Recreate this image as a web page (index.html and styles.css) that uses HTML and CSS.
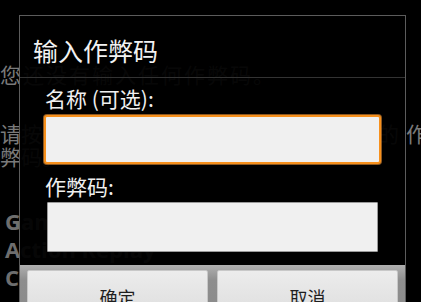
FILE: index.html
```html
<!DOCTYPE html>
<html lang="zh-CN">
<head>
<meta charset="utf-8">
<title>输入作弊码</title>
<link rel="stylesheet" href="styles.css">
</head>
<body>
<div class="page">
  <p class="empty">您还没有输入任何作弊码。</p>
  <p class="hint"><span class="line first"><span>请按手机菜单键并选择添加按钮来添加新的</span><span>作</span></span><span class="line">弊码。</span></p>
  <ul class="types">
    <li>Game Genie</li>
    <li>Action Replay</li>
    <li>Code Breaker</li>
  </ul>
</div>
<div class="dialog">
  <div class="title">输入作弊码</div>
  <div class="divider"></div>
  <div class="body">
    <label class="label">名称 (可选):</label>
    <div class="field focused"></div>
    <label class="label second">作弊码:</label>
    <div class="field plain"></div>
  </div>
  <div class="buttons">
    <div class="btn">确定</div>
    <div class="btn">取消</div>
  </div>
</div>
</body>
</html>
```
FILE: styles.css
```css
html, body {
  margin: 0;
  padding: 0;
  background: #000;
  width: 421px;
  height: 302px;
  overflow: hidden;
  font-family: "Noto Sans CJK SC", "Noto Sans", sans-serif;
}
.page {
  color: #7a7a7a;
}
.empty {
  margin: 0;
  padding-top: 62px;
  font-size: 21px;
  line-height: 24px;
  letter-spacing: 2px;
  white-space: nowrap;
}
.hint {
  margin: 36px 0 0 0;
  font-size: 21px;
  line-height: 23px;
  white-space: nowrap;
}
.hint .line {
  display: block;
}
.hint .line.first {
  display: flex;
  justify-content: space-between;
  width: 427px;
}
.types {
  list-style: none;
  margin: 39px 0 0 0;
  padding: 0 0 0 5px;
  font-family: "Open Sans", "DejaVu Sans", sans-serif;
  font-weight: bold;
  font-size: 22px;
  line-height: 28px;
  color: #6e6e6e;
  white-space: nowrap;
}
.dialog {
  position: absolute;
  left: 19px;
  top: 15px;
  width: 385px;
  height: 300px;
  border: 1px solid #5c5c5c;
  background: rgba(0, 0, 0, 0.94);
  display: flex;
  flex-direction: column;
}
.title {
  height: 54px;
  padding: 7px 0 0 13px;
  display: flex;
  align-items: center;
  font-size: 25px;
  color: #f2f2f2;
}
.divider {
  height: 1px;
  background: #333;
}
.body {
  display: flex;
  flex-direction: column;
  padding: 8px 0 13px 24px;
}
.label {
  display: block;
  padding-left: 1px;
  font-size: 21px;
  line-height: 25px;
  color: #f0f0f0;
}
.label.second {
  margin-top: 10px;
}
.field {
  box-sizing: border-box;
  background: #f0f0f0;
}
.field.focused {
  margin-top: 4px;
  width: 337px;
  height: 49px;
  border: 2px solid #f7901c;
  border-radius: 3px;
  box-shadow: 0 0 0 1px rgba(255, 160, 60, 0.55);
}
.field.plain {
  margin: 3px 0 0 3px;
  width: 331px;
  height: 50px;
  border: 1px solid #9a9a9a;
  border-radius: 1px;
}
.buttons {
  flex: 1;
  display: flex;
  gap: 9px;
  padding: 5px 7px 0 7px;
  background: linear-gradient(#b0b0b0, #8e8e8e 30%, #8a8a8a);
}
.btn {
  width: 181px;
  box-sizing: border-box;
  padding-top: 15px;
  text-align: center;
  font-size: 18px;
  line-height: 22px;
  color: #1e1e1e;
  background: linear-gradient(#ececec, #dedede);
  border: 1px solid #c8c8c8;
  border-radius: 2px;
}
```
